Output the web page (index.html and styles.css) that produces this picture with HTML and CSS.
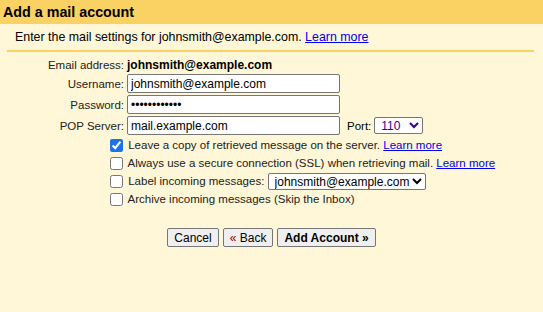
FILE: index.html
```html
<!DOCTYPE html>
<html>
<head>
<meta charset="utf-8">
<link rel="stylesheet" href="styles.css">
</head>
<body>
<div class="header">Add a mail account</div>
<div class="sub">Enter the mail settings for johnsmith@example.com. <a href="#">Learn more</a></div>
<div class="rule"></div>
<div class="form">
  <div class="lbl first">Email address:</div>
  <div class="val first"><b>johnsmith@example.com</b></div>
  <div class="lbl">Username:</div>
  <div class="val"><input class="txt" type="text" value="johnsmith@example.com"></div>
  <div class="lbl">Password:</div>
  <div class="val"><input class="txt" type="password" value="secretpasswd"></div>
  <div class="lbl">POP Server:</div>
  <div class="val"><input class="txt" type="text" value="mail.example.com"><span class="port">Port:</span><select class="sel port-sel"><option>110</option></select></div>
</div>
<div class="checks">
  <label class="chk"><input type="checkbox" checked> Leave a copy of retrieved message on the server. <a href="#">Learn more</a></label>
  <label class="chk"><input type="checkbox"> Always use a secure connection (SSL) when retrieving mail. <a href="#">Learn more</a></label>
  <label class="chk"><input type="checkbox"> Label incoming messages: <select class="sel label-sel"><option>johnsmith@example.com</option></select></label>
  <label class="chk"><input type="checkbox"> Archive incoming messages (Skip the Inbox)</label>
</div>
<div class="buttons">
  <button class="btn">Cancel</button>
  <button class="btn"><span class="arr">«</span> Back</button>
  <button class="btn bold">Add Account »</button>
</div>
</body>
</html>
```
FILE: styles.css
```css
html, body {
  margin: 0;
  padding: 0;
  background: #fff7d7;
  font-family: "Liberation Sans", Arial, sans-serif;
  font-size: 11.5px;
  color: #000;
  height: 312px;
}
.header {
  background: #fad163;
  height: 24px;
  line-height: 25px;
  font-size: 14.3px;
  font-weight: bold;
  padding-left: 3px;
}
.sub {
  padding: 5px 0 0 15px;
  height: 16px;
  line-height: 16px;
  font-size: 12.4px;
}
a { color: #0000ee; text-decoration: underline; }
.rule {
  height: 2px;
  background: #fad163;
  margin: 5px 9px 0 7px;
}
.form {
  display: grid;
  grid-template-columns: 124px auto;
  column-gap: 3px;
  row-gap: 2px;
  margin-top: 6px;
  align-items: center;
}
.lbl {
  text-align: right;
  color: #222;
}
.val { display: flex; align-items: center; }
.first { height: 14px; line-height: 14px; }
.val.first b { font-size: 12px; }
.txt {
  box-sizing: border-box;
  width: 213px;
  height: 19px;
  font-family: "Liberation Sans", Arial, sans-serif;
  font-size: 12px;
  border: 1px solid #767676;
  border-radius: 2px;
  padding: 1px 3px;
  margin: 0;
  background: #fff;
  color: #000;
}
.port { margin-left: 7px; margin-right: 3px; }
.sel {
  font-family: "Liberation Sans", Arial, sans-serif;
  font-size: 12px;
  height: 17px;
  border: 1px solid #767676;
  border-radius: 2px;
  background: #fff;
  color: #000;
  padding: 0 0 0 2px;
  margin: 0;
}
.port-sel { width: 49px; color: #330099; }
.label-sel { width: 158px; height: 17px; margin-left: 0; }
.checks {
  margin-top: 1px;
  padding-left: 106px;
  display: flex;
  flex-direction: column;
}
.chk {
  display: flex;
  align-items: center;
  height: 18px;
  white-space: pre;
  color: #222;
}
.chk input[type=checkbox] {
  width: 13px;
  height: 13px;
  margin: 0 2px 0 4px;
  accent-color: #1a73e8;
}
.buttons {
  display: flex;
  justify-content: center;
  gap: 4px;
  margin-top: 20px;
}
.btn {
  font-family: "Liberation Sans", Arial, sans-serif;
  font-size: 12px;
  height: 19px;
  padding: 0 6px;
  background: #efefef;
  border: 1px solid #767676;
  border-radius: 2px;
  color: #000;
  margin: 0;
}
.bold { font-weight: bold; }
.arr { color: #8b0000; }
```
